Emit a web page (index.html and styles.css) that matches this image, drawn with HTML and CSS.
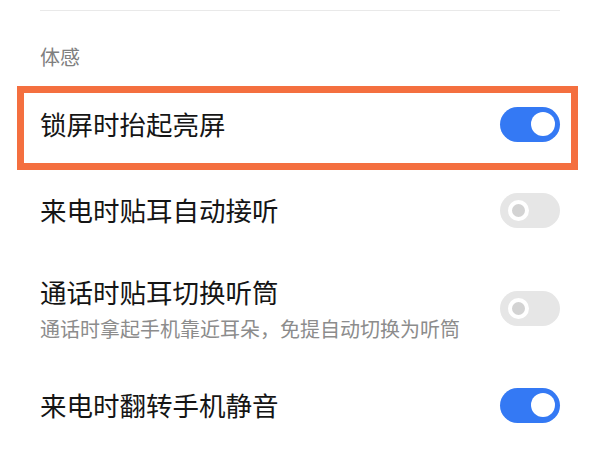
FILE: index.html
```html
<!DOCTYPE html>
<html lang="zh-CN">
<head>
<meta charset="utf-8">
<title>体感</title>
<link rel="stylesheet" href="styles.css">
</head>
<body>
<div class="page">
  <div class="divider"></div>
  <div class="section-title">体感</div>

  <div class="row row-highlight">
    <div class="row-text">
      <div class="row-title">锁屏时抬起亮屏</div>
    </div>
    <span class="switch switch-on"><span class="knob"></span></span>
  </div>

  <div class="row row-first">
    <div class="row-text">
      <div class="row-title">来电时贴耳自动接听</div>
    </div>
    <span class="switch switch-off"><span class="knob"></span></span>
  </div>

  <div class="row">
    <div class="row-text">
      <div class="row-title">通话时贴耳切换听筒</div>
      <div class="row-sub">通话时拿起手机靠近耳朵，免提自动切换为听筒</div>
    </div>
    <span class="switch switch-off"><span class="knob"></span></span>
  </div>

  <div class="row">
    <div class="row-text">
      <div class="row-title">来电时翻转手机静音</div>
    </div>
    <span class="switch switch-on"><span class="knob"></span></span>
  </div>
</div>
</body>
</html>
```

FILE: styles.css
```css
html, body {
  margin: 0;
  padding: 0;
  background: #ffffff;
}

body {
  font-family: "Noto Sans CJK SC", "Noto Sans", sans-serif;
  color: #151515;
  width: 600px;
  height: 450px;
  overflow: hidden;
}

.page {
  display: flex;
  flex-direction: column;
}

.divider {
  margin: 10px 40px 0 40px;
  height: 1px;
  background: #e9e9e9;
}

.section-title {
  margin-top: 32px;
  padding-left: 40px;
  font-size: 20px;
  line-height: 28px;
  color: #7f7f7f;
}

.row {
  display: flex;
  align-items: center;
  justify-content: space-between;
  padding: 22px 40px 22px 40px;
}

.row-first {
  padding-top: 22px;
  padding-bottom: 24px;
}

.row-highlight {
  margin: 15px 22px 0 17px;
  border: 7px solid #f46f3f;
  padding: 13px 11px 21px 16px;
}

.row-text {
  display: flex;
  flex-direction: column;
}

.row-title {
  font-size: 26.5px;
  line-height: 36px;
  color: #151515;
}

.row-sub {
  margin-top: 5px;
  font-size: 20px;
  line-height: 28px;
  color: #8c8c8c;
}

.switch {
  flex: none;
  position: relative;
  width: 60px;
  height: 35px;
  border-radius: 17.5px;
  display: flex;
  align-items: center;
}

.switch-on {
  background: #3479f4;
  justify-content: flex-end;
  padding-right: 5.5px;
  box-sizing: border-box;
}

.switch-on .knob {
  width: 24px;
  height: 24px;
  border-radius: 50%;
  background: #ffffff;
}

.switch-off {
  background: #e6e6e6;
  justify-content: flex-start;
  padding-left: 8px;
  box-sizing: border-box;
}

.switch-off .knob {
  width: 13px;
  height: 13px;
  border-radius: 50%;
  background: #d3d3d3;
  border: 4px solid #ffffff;
}
```
